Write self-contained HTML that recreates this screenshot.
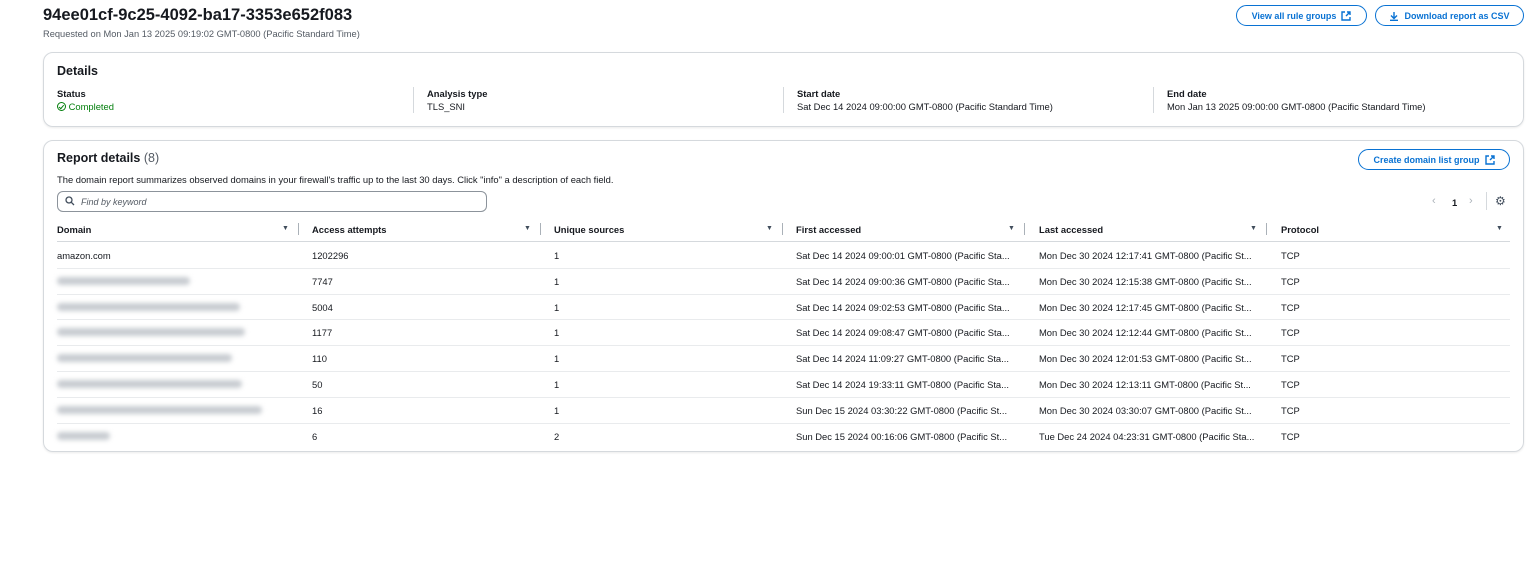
<!DOCTYPE html>
<html><head><style>
*{box-sizing:border-box;margin:0;padding:0}
body{width:1535px;height:563px;background:#fff;font-family:"Liberation Sans",sans-serif;color:#16191f;position:relative;overflow:hidden;font-size:9.4px}
.a{position:absolute;white-space:nowrap}
.card{position:absolute;border:1px solid #d5d9dd;border-radius:10px;box-shadow:0 1px 2px rgba(0,0,0,.08)}
.btn{position:absolute;border:1.5px solid #0972d3;border-radius:14px;color:#0972d3;font-weight:bold;font-size:9px;display:flex;align-items:center;justify-content:center;gap:5px;height:21px}
.b{font-weight:bold}
.g{color:#545b64}
.hd{position:absolute;top:224px;height:18px;font-weight:bold;font-size:9.4px}
.line{position:absolute;left:57px;width:1453px;height:1px;background:#e9ebed}
.blur{position:absolute;height:8px;background:#c8ccd1;filter:blur(2.5px);border-radius:4px}
.sep{position:absolute;width:1px;height:12px;background:#aab1b8}
.tri{position:absolute;font-size:7px;color:#414d5c}
</style></head><body>
<div class="a b" style="left:43px;top:6px;font-size:16.5px">94ee01cf-9c25-4092-ba17-3353e652f083</div>
<div class="a g" style="left:43px;top:29px;font-size:9.3px">Requested on Mon Jan 13 2025 09:19:02 GMT-0800 (Pacific Standard Time)</div>
<div class="btn" style="left:1236px;top:5px;width:131px">View all rule groups <svg width="10" height="10" viewBox="0 0 10 10" fill="none" stroke="#0972d3" stroke-width="1.4"><path d="M4 1H1v8h8V6M6 1h3v3M9 1L5 5"/></svg></div>
<div class="btn" style="left:1375px;top:5px;width:149px"><svg width="10" height="10" viewBox="0 0 10 10" fill="none" stroke="#0972d3" stroke-width="1.4"><path d="M5 1v6M2 4.5l3 3 3-3M1 9.3h8"/></svg> Download report as CSV</div>

<div class="card" style="left:43px;top:52px;width:1481px;height:75px"></div>
<div class="a b" style="left:57px;top:64px;font-size:12.5px">Details</div>
<div class="a b" style="left:57px;top:88px">Status</div>
<div class="a" style="left:57px;top:101px;color:#037f0c"><span style="display:inline-block;width:9px;height:9px;border:1.3px solid #037f0c;border-radius:50%;vertical-align:-1px;position:relative"><span style="position:absolute;left:1.5px;top:0.5px;width:3px;height:4.5px;border-right:1.3px solid #037f0c;border-bottom:1.3px solid #037f0c;transform:rotate(40deg)"></span></span> Completed</div>
<div class="sep" style="left:413px;top:87px;height:26px;background:#d5d9dd"></div>
<div class="a b" style="left:427px;top:88px">Analysis type</div>
<div class="a" style="left:427px;top:101px">TLS_SNI</div>
<div class="sep" style="left:783px;top:87px;height:26px;background:#d5d9dd"></div>
<div class="a b" style="left:797px;top:88px">Start date</div>
<div class="a" style="left:797px;top:101px">Sat Dec 14 2024 09:00:00 GMT-0800 (Pacific Standard Time)</div>
<div class="sep" style="left:1153px;top:87px;height:26px;background:#d5d9dd"></div>
<div class="a b" style="left:1167px;top:88px">End date</div>
<div class="a" style="left:1167px;top:101px">Mon Jan 13 2025 09:00:00 GMT-0800 (Pacific Standard Time)</div>

<div class="card" style="left:43px;top:140px;width:1481px;height:312px"></div>
<div class="a" style="left:57px;top:151px;font-size:12.5px"><span class="b">Report details</span> <span class="g">(8)</span></div>
<div class="a" style="left:57px;top:174px;font-size:9.4px">The domain report summarizes observed domains in your firewall's traffic up to the last 30 days. Click "info" a description of each field.</div>
<div class="btn" style="left:1358px;top:149px;width:152px">Create domain list group <svg width="10" height="10" viewBox="0 0 10 10" fill="none" stroke="#0972d3" stroke-width="1.4"><path d="M4 1H1v8h8V6M6 1h3v3M9 1L5 5"/></svg></div>
<div class="a" style="left:57px;top:191px;width:430px;height:21px;border:1.3px solid #8c939b;border-radius:6px"></div>
<svg class="a" style="left:65px;top:196px" width="10" height="10" viewBox="0 0 10 10" fill="none" stroke="#414d5c" stroke-width="1.3"><circle cx="4" cy="4" r="3"/><path d="M6.3 6.3L9 9"/></svg>
<div class="a g" style="left:81px;top:197px;font-style:italic;font-size:9px">Find by keyword</div>
<div class="a" style="left:1432px;top:195px;color:#aab1b8;font-size:11px">‹</div>
<div class="a b" style="left:1452px;top:197px">1</div>
<div class="a" style="left:1469px;top:195px;color:#aab1b8;font-size:11px">›</div>
<div class="sep" style="left:1486px;top:192px;height:18px;background:#d5d9dd"></div>
<div class="a" style="left:1495px;top:194px;font-size:12px;color:#414d5c">⚙</div>

<div class="hd" style="left:57px">Domain</div><div class="tri" style="left:282px;top:225px">▼</div><div class="sep" style="left:298px;top:223px"></div>
<div class="hd" style="left:312px">Access attempts</div><div class="tri" style="left:524px;top:225px">▼</div><div class="sep" style="left:540px;top:223px"></div>
<div class="hd" style="left:554px">Unique sources</div><div class="tri" style="left:766px;top:225px">▼</div><div class="sep" style="left:782px;top:223px"></div>
<div class="hd" style="left:796px">First accessed</div><div class="tri" style="left:1008px;top:225px">▼</div><div class="sep" style="left:1024px;top:223px"></div>
<div class="hd" style="left:1039px">Last accessed</div><div class="tri" style="left:1250px;top:225px">▼</div><div class="sep" style="left:1266px;top:223px"></div>
<div class="hd" style="left:1281px">Protocol</div><div class="tri" style="left:1496px;top:225px">▼</div>
<div class="line" style="top:241px;background:#d5d9dd"></div>

<div id="rows"></div>
<script>
var d=[["amazon.com","1202296","1","Sat Dec 14 2024 09:00:01 GMT-0800 (Pacific Sta...","Mon Dec 30 2024 12:17:41 GMT-0800 (Pacific St...",0],
["","7747","1","Sat Dec 14 2024 09:00:36 GMT-0800 (Pacific Sta...","Mon Dec 30 2024 12:15:38 GMT-0800 (Pacific St...",133],
["","5004","1","Sat Dec 14 2024 09:02:53 GMT-0800 (Pacific Sta...","Mon Dec 30 2024 12:17:45 GMT-0800 (Pacific St...",183],
["","1177","1","Sat Dec 14 2024 09:08:47 GMT-0800 (Pacific Sta...","Mon Dec 30 2024 12:12:44 GMT-0800 (Pacific St...",188],
["","110","1","Sat Dec 14 2024 11:09:27 GMT-0800 (Pacific Sta...","Mon Dec 30 2024 12:01:53 GMT-0800 (Pacific St...",175],
["","50","1","Sat Dec 14 2024 19:33:11 GMT-0800 (Pacific Sta...","Mon Dec 30 2024 12:13:11 GMT-0800 (Pacific St...",185],
["","16","1","Sun Dec 15 2024 03:30:22 GMT-0800 (Pacific St...","Mon Dec 30 2024 03:30:07 GMT-0800 (Pacific St...",205],
["","6","2","Sun Dec 15 2024 00:16:06 GMT-0800 (Pacific St...","Tue Dec 24 2024 04:23:31 GMT-0800 (Pacific Sta...",53]];
var h="",xs=[57,312,554,796,1039];
d.forEach(function(r,i){var y=242+i*25.8;
 if(r[0])h+='<div class="a" style="left:57px;top:'+(y+8)+'px">'+r[0]+'</div>';
 else h+='<div class="blur" style="left:57px;top:'+(y+9)+'px;width:'+r[5]+'px"></div>';
 for(var j=1;j<5;j++)h+='<div class="a" style="left:'+xs[j]+'px;top:'+(y+8)+'px">'+r[j]+'</div>';
 h+='<div class="a" style="left:1281px;top:'+(y+8)+'px">TCP</div>';
 if(i<7)h+='<div class="line" style="top:'+(y+25.8)+'px"></div>';});
document.getElementById("rows").innerHTML=h;
</script>
</body></html>
